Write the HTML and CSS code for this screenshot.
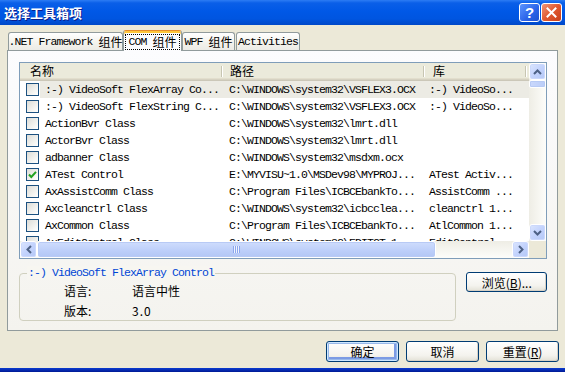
FILE: index.html
```html
<!DOCTYPE html>
<html lang="zh-CN">
<head>
<meta charset="utf-8">
<title>选择工具箱项</title>
<link rel="stylesheet" href="styles.css">
</head>
<body>
<div class="titlebar">
  <div class="title">选择工具箱项</div>
  <div class="tb-btns">
    <div class="tb-btn help">?</div>
    <div class="tb-btn close"><svg width="11" height="11" viewBox="0 0 11 11"><path d="M1.5 1.5L9.5 9.5M9.5 1.5L1.5 9.5" stroke="#fff" stroke-width="2" stroke-linecap="square"/></svg></div>
  </div>
</div>
<div class="client">
  <div class="tabs">
    <div class="tab t1">.NET Framework<span class="cn">组件</span></div>
    <div class="tab sel t2"><span class="focus">COM<span class="cn">组件</span></span></div>
    <div class="tab t3">WPF<span class="cn">组件</span></div>
    <div class="tab t4">Activities</div>
  </div>
  <div class="panel">
    <div class="list">
      <div class="lv">
        <div class="lv-head">
          <div class="h h1"><span class="cn">名称</span></div>
          <div class="h h2"><span class="cn">路径</span></div>
          <div class="h h3"><span class="cn">库</span></div>
          <div class="h h4"></div>
        </div>
        <div class="row sel"><span class="cb"></span><div class="cells"><span class="c1">:-) VideoSoft FlexArray Co...</span><span class="c2">C:\WINDOWS\system32\VSFLEX3.OCX</span><span class="c3">:-) VideoSo...</span></div></div>
        <div class="row"><span class="cb"></span><div class="cells"><span class="c1">:-) VideoSoft FlexString C...</span><span class="c2">C:\WINDOWS\system32\VSFLEX3.OCX</span><span class="c3">:-) VideoSo...</span></div></div>
        <div class="row"><span class="cb"></span><div class="cells"><span class="c1">ActionBvr Class</span><span class="c2">C:\WINDOWS\system32\lmrt.dll</span><span class="c3"></span></div></div>
        <div class="row"><span class="cb"></span><div class="cells"><span class="c1">ActorBvr Class</span><span class="c2">C:\WINDOWS\system32\lmrt.dll</span><span class="c3"></span></div></div>
        <div class="row"><span class="cb"></span><div class="cells"><span class="c1">adbanner Class</span><span class="c2">C:\WINDOWS\system32\msdxm.ocx</span><span class="c3"></span></div></div>
        <div class="row"><span class="cb checked"><svg width="11" height="11" viewBox="0 0 11 11"><path d="M2 5.5L4.3 8L9 2.8" fill="none" stroke="#21A121" stroke-width="2"/></svg></span><div class="cells"><span class="c1">ATest Control</span><span class="c2">E:\MYVISU~1.0\MSDev98\MYPROJ...</span><span class="c3">ATest Activ...</span></div></div>
        <div class="row"><span class="cb"></span><div class="cells"><span class="c1">AxAssistComm Class</span><span class="c2">C:\Program Files\ICBCEbankTo...</span><span class="c3">AssistComm ...</span></div></div>
        <div class="row"><span class="cb"></span><div class="cells"><span class="c1">Axcleanctrl Class</span><span class="c2">C:\WINDOWS\system32\icbcclea...</span><span class="c3">cleanctrl 1...</span></div></div>
        <div class="row"><span class="cb"></span><div class="cells"><span class="c1">AxCommon Class</span><span class="c2">C:\Program Files\ICBCEbankTo...</span><span class="c3">AtlCommon 1...</span></div></div>
        <div class="row"><span class="cb"></span><div class="cells"><span class="c1">AxEditControl Class</span><span class="c2">C:\WINDOWS\system32\EDITCT~1...</span><span class="c3">EditControl ...</span></div></div>
      </div>
      <div class="vscroll">
        <div class="sbtn"><svg width="9" height="6" viewBox="0 0 9 6"><path d="M1 5L4.5 1.5L8 5" fill="none" stroke="#4D6185" stroke-width="2"/></svg></div>
        <div class="vtrack"><div class="vthumb"></div></div>
        <div class="sbtn"><svg width="9" height="6" viewBox="0 0 9 6"><path d="M1 1L4.5 4.5L8 1" fill="none" stroke="#4D6185" stroke-width="2"/></svg></div>
      </div>
      <div class="hscroll">
        <div class="sbtn"><svg width="6" height="9" viewBox="0 0 6 9"><path d="M5 1L1.5 4.5L5 8" fill="none" stroke="#4D6185" stroke-width="2"/></svg></div>
        <div class="htrack"><div class="hthumb"><span class="grip"></span></div></div>
        <div class="sbtn"><svg width="6" height="9" viewBox="0 0 6 9"><path d="M1 1L4.5 4.5L1 8" fill="none" stroke="#4D6185" stroke-width="2"/></svg></div>
      </div>
      <div class="corner"></div>
    </div>
    <div class="info">
      <div class="group">
        <span class="legend">:-) VideoSoft FlexArray Control</span>
        <div class="kv"><span class="k">语言:</span><span class="v">语言中性</span></div>
        <div class="kv"><span class="k">版本:</span><span class="v num">3.0</span></div>
      </div>
      <button class="btn browse">浏览(<u>B</u>)...</button>
    </div>
  </div>
  <div class="buttons">
    <button class="btn default">确定</button>
    <button class="btn">取消</button>
    <button class="btn">重置(<u>R</u>)</button>
  </div>
</div>
<div class="frame-bottom"></div>
</body>
</html>
```
FILE: styles.css
```css
* { box-sizing: border-box; }
html, body { margin: 0; padding: 0; }
body {
  width: 565px;
  height: 372px;
  overflow: hidden;
  background: #ECE9D8;
  display: flex;
  flex-direction: column;
  font-family: "Liberation Mono", "Noto Sans CJK SC", monospace;
  font-size: 11.5px;
  letter-spacing: -0.9px;
  color: #000;
}
.cn {
  font-family: "Noto Sans CJK SC", sans-serif;
  font-size: 12px;
  letter-spacing: 0;
}
.tab .cn { margin-left: 6px; }

/* title bar */
.titlebar {
  height: 25px;
  flex: none;
  display: flex;
  align-items: center;
  justify-content: space-between;
  padding: 0 3px 0 4px;
  background: linear-gradient(#2C7CF4 0%, #0A5FE8 12%, #0058E6 45%, #0055E0 75%, #0048C8 100%);
}
.title {
  font-family: "Noto Sans CJK SC", sans-serif;
  font-size: 13px;
  font-weight: bold;
  letter-spacing: 0;
  color: #fff;
  text-shadow: 1px 1px 0 #0A1E8C;
  line-height: 25px;
}
.tb-btns { display: flex; gap: 1px; }
.tb-btn {
  width: 21px;
  height: 19px;
  border: 1px solid #fff;
  border-radius: 3px;
  display: flex;
  align-items: center;
  justify-content: center;
}
.help {
  background: linear-gradient(135deg, #5C95FF, #2A62E8 60%, #1E50D0);
  color: #fff;
  font-family: "Liberation Sans", sans-serif;
  font-weight: bold;
  font-size: 15px;
  letter-spacing: 0;
}
.close {
  background: linear-gradient(135deg, #F0967A, #E0582F 50%, #C8401A);
}

/* client */
.client {
  flex: 1;
  display: flex;
  flex-direction: column;
  padding: 5px 7px 0 7px;
}
.tabs {
  height: 20px;
  display: flex;
  align-items: flex-end;
  padding-left: 1px;
}
.tab {
  height: 18px;
  border: 1px solid #919B9C;
  border-bottom: none;
  border-radius: 3px 3px 0 0;
  background: linear-gradient(#FFFFFF, #F3F2EC 60%, #ECEBE6);
  display: flex;
  align-items: center;
  justify-content: center;
  white-space: nowrap;
  line-height: 16px;
}
.t1 { width: 115px; }
.t2 { width: 59px; }
.t3 { width: 53px; }
.t4 { width: 64px; margin-left: 1px; }
.tab.sel {
  height: 21px;
  margin-bottom: -1px;
  position: relative;
  z-index: 1;
  background: #FCFCFE;
  border-top: 1px solid #E68B2C;
  box-shadow: inset 0 2px 0 #FFC73C;
  padding-top: 2px;
}
.focus {
  border: 1px dotted #000;
  padding: 0 2px;
  line-height: 14px;
  display: flex;
  align-items: center;
}

.panel {
  height: 281px;
  flex: none;
  border: 1px solid #919B9C;
  background: linear-gradient(#FCFCFE, #F4F3EE);
  padding: 11px 10px 0 11px;
}

/* list view */
.list {
  height: 197px;
  border: 1px solid #7F9DB9;
  background: #fff;
  display: grid;
  grid-template-columns: 509px 17px;
  grid-template-rows: 178px 17px;
}
.lv { overflow: hidden; }
.lv-head {
  height: 18px;
  display: flex;
  background: #EBEADB;
  box-shadow: inset 0 -1px 0 #CBC7B8, inset 0 -2px 0 #D6D2C2, inset 0 -3px 0 #E2DECD;
}
.h {
  height: 18px;
  line-height: 16px;
  position: relative;
  white-space: nowrap;
}
.h1 { width: 202px; padding-left: 10px; }
.h2 { width: 202px; padding-left: 8px; }
.h3 { width: 102px; padding-left: 9px; }
.h4 { flex: 1; }
.h1::after, .h2::after, .h3::after {
  content: "";
  position: absolute;
  right: 0;
  top: 3px;
  height: 11px;
  width: 1px;
  background: #C7C5B2;
  box-shadow: 1px 0 0 #fff;
}
.row {
  height: 17px;
  display: flex;
  align-items: center;
  padding-left: 6px;
  white-space: nowrap;
}
.cb {
  width: 13px;
  height: 13px;
  flex: none;
  border: 1px solid #1C5180;
  background: linear-gradient(135deg, #DCDCD7, #F6F6F3 70%, #fff);
  display: flex;
  align-items: center;
  justify-content: center;
}
.cells {
  margin-left: 1px;
  flex: 1;
  height: 17px;
  display: flex;
  line-height: 17px;
}
.row.sel .cells { background: #ECEBE4; }
.c1 { width: 182px; padding-left: 5px; overflow: hidden; }
.c2 { width: 202px; padding-left: 7px; overflow: hidden; }
.c3 { width: 102px; padding-left: 5px; overflow: hidden; }

/* scrollbars */
.sbtn {
  width: 17px;
  height: 17px;
  flex: none;
  border: 1px solid #fff;
  border-radius: 3px;
  background: linear-gradient(135deg, #DCE6FE, #C3D3FD 50%, #B4C8F6);
  box-shadow: inset 0 0 0 1px #CBD8FC;
  display: flex;
  align-items: center;
  justify-content: center;
}
.vscroll {
  display: flex;
  flex-direction: column;
  background: linear-gradient(90deg, #EEEDE5, #FDFDFA);
}
.vtrack { flex: 1; }
.vthumb {
  height: 8px;
  border: 1px solid #fff;
  border-radius: 2px;
  background: linear-gradient(90deg, #CAD8FC, #BACDF8);
  box-shadow: inset 0 0 0 1px #B7CAF5;
}
.hscroll {
  display: flex;
  background: linear-gradient(#EEEDE5, #FDFDFA);
}
.htrack { flex: 1; }
.hthumb {
  width: 399px;
  height: 17px;
  border: 1px solid #fff;
  border-radius: 3px;
  background: linear-gradient(#CFDDFD, #BCCEF9 60%, #B2C6F5);
  box-shadow: inset 0 0 0 1px #B8CAF5;
  display: flex;
  align-items: center;
  justify-content: center;
}
.grip {
  width: 7px;
  height: 7px;
  background: repeating-linear-gradient(90deg, #8CA6EE 0 1px, #EEF4FE 1px 2px);
}
.corner { background: #ECE9D8; }

/* info group */
.info {
  display: flex;
  align-items: flex-start;
}
.group {
  margin-top: 14px;
  width: 440px;
  height: 48px;
  border: 1px solid #D0D0BF;
  border-radius: 4px;
  padding-top: 6px;
  position: relative;
}
.legend {
  position: absolute;
  left: 7px;
  top: -8px;
  padding: 0 1px;
  line-height: 14px;
  color: #0046D5;
  background: #F7F6F1;
}
.kv {
  height: 20px;
  display: flex;
  align-items: center;
  font-family: "Noto Sans CJK SC", sans-serif;
  font-size: 12px;
  letter-spacing: 0;
}
.k { width: 68px; margin-left: 44px; }
.v { letter-spacing: 0; }
.v.num { letter-spacing: 1px; }

.btn {
  font-family: "Noto Sans CJK SC", sans-serif;
  font-size: 12px;
  letter-spacing: 0;
  color: #000;
  height: 21px;
  width: 73px;
  padding: 0;
  border: 1px solid #003C74;
  border-radius: 3px;
  background: linear-gradient(#FFFFFF, #F4F3EE 70%, #E3E1D6);
  box-shadow: inset -1px -1px 0 #D6D0C5;
  display: flex;
  align-items: center;
  justify-content: center;
  line-height: 19px;
}
.btn u { text-decoration: underline; }
.browse {
  margin-top: 13px;
  margin-left: 10px;
  width: 81px;
  height: 20px;
}
.btn.default {
  box-shadow: inset 0 0 0 1px #CEE7FF, inset 0 0 0 2px #98B8EA, inset -2px -2px 0 2px #7C9BE4;
}

.buttons {
  margin-top: 10px;
  margin-right: -1px;
  display: flex;
  justify-content: flex-end;
  gap: 7px;
}

.frame-bottom {
  height: 4px;
  flex: none;
  background: linear-gradient(#0B3BD0, #001A94);
}
```
